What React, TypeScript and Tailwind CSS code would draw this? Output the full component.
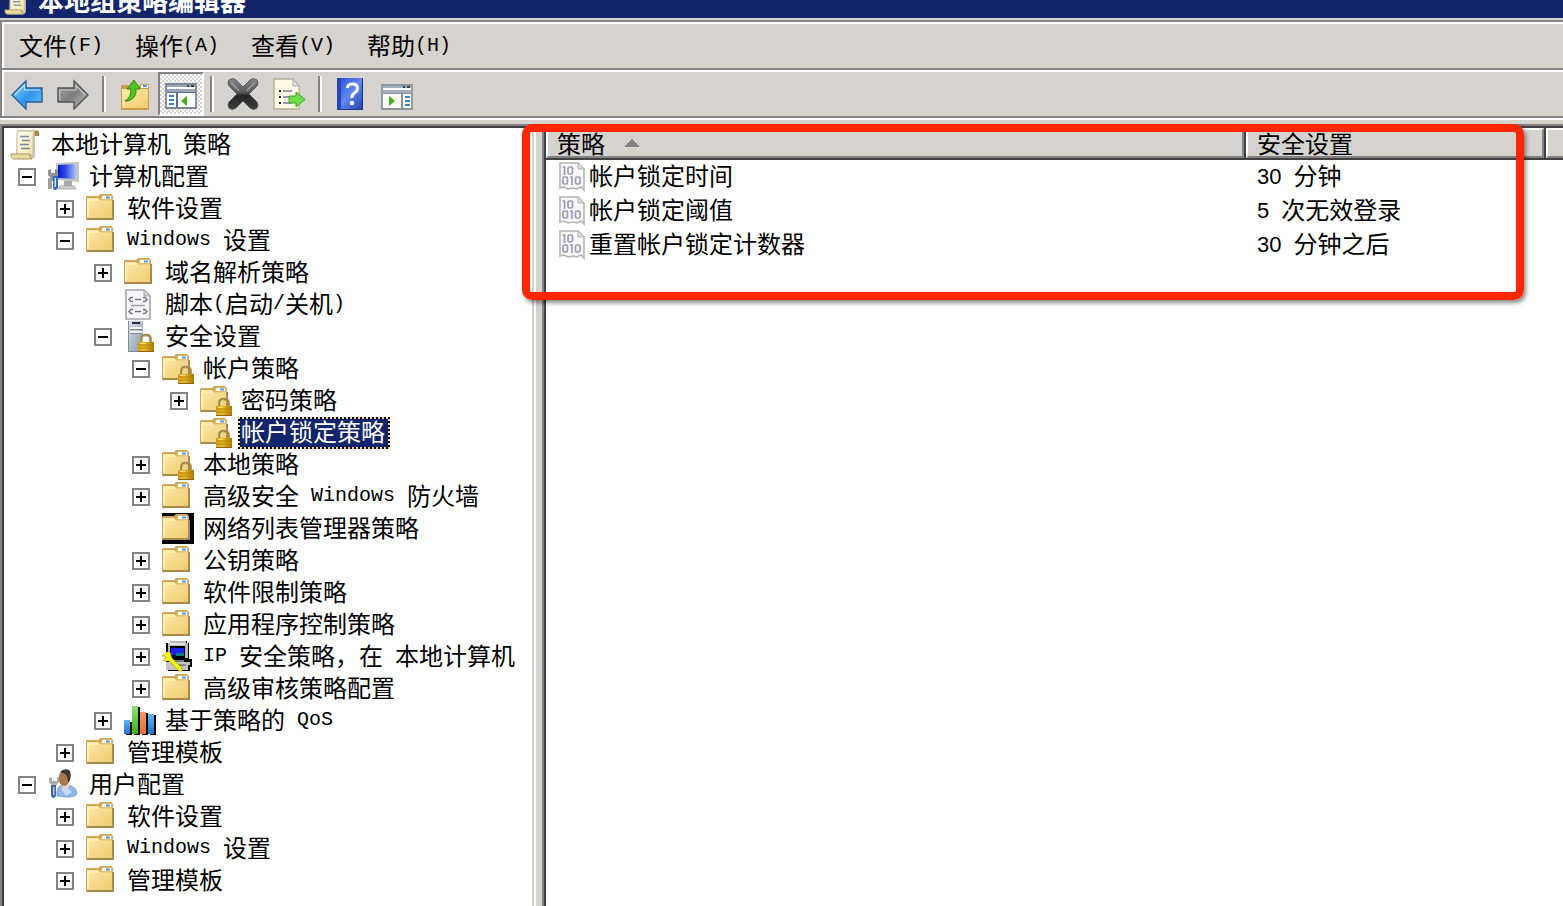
import { FC, ReactNode, useState } from 'react';
import clsx from 'clsx';

type IconProps = {
  className?: string
};

type TreeItem = {
  id: string
  label: string
  icon: FC<IconProps>
  children?: TreeItem[]
  closed?: boolean
};

/* ---------- icons ---------- */

const Svg = ({ className = 'size-8', children }: { className?: string, children: ReactNode }) => (
  <svg viewBox="0 0 32 32" className={clsx('shrink-0', className)} aria-hidden="true">{children}</svg>
);

// gradients shared by all the icons
const Gradients = () => (
  <svg className="absolute size-0" aria-hidden="true">
    <defs>
      <linearGradient id="g-folder" x1="0" y1="0" x2="1" y2="1">
        <stop offset="0" stopColor="#fdeaa8" />
        <stop offset="1" stopColor="#efcb70" />
      </linearGradient>
      <linearGradient id="g-blue" x1="0" y1="0" x2="1" y2="1">
        <stop offset="0" stopColor="#8fd6ff" />
        <stop offset="0.55" stopColor="#2f95ea" />
        <stop offset="1" stopColor="#7cc4f8" />
      </linearGradient>
      <linearGradient id="g-gray" x1="0" y1="0" x2="1" y2="1">
        <stop offset="0" stopColor="#a9a9a9" />
        <stop offset="0.5" stopColor="#7c7c7c" />
        <stop offset="1" stopColor="#c4c4c4" />
      </linearGradient>
      <linearGradient id="g-cross" x1="0" y1="0" x2="0" y2="1">
        <stop offset="0" stopColor="#858585" />
        <stop offset="0.45" stopColor="#5a5a5a" />
        <stop offset="0.55" stopColor="#262626" />
        <stop offset="1" stopColor="#3c3c3c" />
      </linearGradient>
      <linearGradient id="g-help" x1="0" y1="0" x2="1" y2="1">
        <stop offset="0" stopColor="#2a50cf" />
        <stop offset="0.5" stopColor="#5f86f0" />
        <stop offset="1" stopColor="#2140a8" />
      </linearGradient>
      <linearGradient id="g-screen" x1="0" y1="0" x2="1" y2="0">
        <stop offset="0" stopColor="#0a18c8" />
        <stop offset="0.4" stopColor="#2748e6" />
        <stop offset="1" stopColor="#a9c4fb" />
      </linearGradient>
      <linearGradient id="g-scroll" x1="0" y1="0" x2="1" y2="1">
        <stop offset="0" stopColor="#fffef2" />
        <stop offset="1" stopColor="#f3e5a0" />
      </linearGradient>
      <linearGradient id="g-server" x1="0" y1="0" x2="1" y2="1">
        <stop offset="0" stopColor="#dbe4ec" />
        <stop offset="1" stopColor="#8496a6" />
      </linearGradient>
      <linearGradient id="g-lock" x1="0" y1="0" x2="1" y2="0">
        <stop offset="0" stopColor="#d9a514" />
        <stop offset="0.4" stopColor="#e8b92c" />
        <stop offset="1" stopColor="#a87600" />
      </linearGradient>
      <linearGradient id="g-green" x1="0" y1="0" x2="0" y2="1">
        <stop offset="0" stopColor="#8be36b" />
        <stop offset="1" stopColor="#3fae1c" />
      </linearGradient>
      <linearGradient id="g-orange" x1="0" y1="0" x2="0" y2="1">
        <stop offset="0" stopColor="#f59a66" />
        <stop offset="1" stopColor="#ee6a2c" />
      </linearGradient>
      <linearGradient id="g-bar" x1="0" y1="0" x2="0" y2="1">
        <stop offset="0" stopColor="#62b8f5" />
        <stop offset="1" stopColor="#1f74cc" />
      </linearGradient>
    </defs>
  </svg>
);

const FolderShape = () => (
  <g>
    <path d="M0 27V4l1-1h11l2-2h11l2 2v24z" fill="#cda75a" />
    <path d="M26 7h2v20H1v-2h25z" fill="#a98a4c" />
    <path d="M1 5h11l2 2h12v18H1z" fill="url(#g-folder)" />
    <path d="M2 7v17M2 7h11" stroke="#fff3c4" strokeWidth="1.4" fill="none" />
    <path d="M12 5.5h3l1-3h9l1.5 3-1.5 2H14z" fill="#e6bd6a" />
    <path d="M16 3h9v3h-9z" fill="#fff" />
    <path d="M20 3.5h4v2h-4z" fill="#4a9ae0" />
  </g>
);

const LockShape = () => (
  <g>
    <path d="M19.5 22v-4.500q0-3.500 4.500-3.500t4.500 3.500V22" fill="none" stroke="#a08a4a" strokeWidth="2.600" />
    <path d="M20.500 21v-3.500q0-2.500 3.500-2.500" fill="none" stroke="#d8cc9c" strokeWidth="1" />
    <path d="M16 21h16v10H16z" fill="url(#g-lock)" />
    <path d="M16 24h16M16 27h16" stroke="#b98806" strokeWidth="1" />
    <path d="M16 30h16v1H16z" fill="#8e6700" />
    <path d="M18 22h5v1h-5z" fill="#f7de7c" />
  </g>
);

const FolderIcon: FC<IconProps> = ({ className }) => (
  <Svg className={className}><FolderShape /></Svg>
);

const LockedFolderIcon: FC<IconProps> = ({ className }) => (
  <Svg className={className}>
    <FolderShape />
    <LockShape />
  </Svg>
);

const BlackFolderIcon: FC<IconProps> = ({ className }) => (
  <Svg className={className}>
    <path d="M0 0h32v31H0z" fill="#000" />
    <FolderShape />
  </Svg>
);

const ScrollIcon: FC<IconProps> = ({ className }) => (
  <Svg className={className}>
    <path d="M7 4q0-3 3-3h16q3 0 3 3v2h-4v20q0 4-4 4H6z" fill="#c9c4b4" />
    <path d="M24 2h4q2 1 1 5h-4z" fill="#a48a4a" />
    <path d="M8 2h17q-2 2-2 6v18H7V6q0-3 1-4z" fill="url(#g-scroll)" stroke="#c8bd96" strokeWidth="1" />
    <path d="M1 25h19q-1 3 2 5H4q-3 0-3-5z" fill="#eadb9c" stroke="#a9976a" strokeWidth="1" />
    <path d="M10 7.500h9M12 11.500h8M10 15.500h9M11 19.500h9" stroke="#8087a8" strokeWidth="1.500" />
  </Svg>
);

const ComputerIcon: FC<IconProps> = ({ className }) => (
  <Svg className={className}>
    <path d="M8 2l23-1v20l-23-2z" fill="#c3c3c0" />
    <path d="M10 4l18-1v15l-18-1z" fill="url(#g-screen)" />
    <path d="M16 20h8v5h-8z" fill="#a8a8a8" />
    <path d="M12 25h14l2 3H10z" fill="#d4d4d4" stroke="#9c9c9c" strokeWidth="0.800" />
    <path d="M0 9v5l3 3v3h4v-3l3-3V9L7 8v4H3V8z" fill="#8f9490" />
    <path d="M0 17h4v11H0z" fill="#9b9f9d" />
    <path d="M5 15h5v12l-2 2H6l-1-2z" fill="#2f6fb8" />
    <path d="M6.500 17h1.500v9H6.500z" fill="#cfe4f7" />
  </Svg>
);

const UserIcon: FC<IconProps> = ({ className }) => (
  <Svg className={className}>
    <path d="M9 27q-1-10 6-11h6q8 3 8 9-2 3-9 3z" fill="#8fb6e6" stroke="#6d93c4" strokeWidth="0.800" />
    <path d="M13 20q3-3 6-2l5 5-6 4z" fill="#c5dcf6" />
    <path d="M13 17l5-4 4 4-5 3z" fill="#e8d6bf" />
    <ellipse cx="16" cy="9.500" rx="5.500" ry="7.500" fill="#a9774a" />
    <path d="M12 3q4-4 9-2 3 3 1 10l-2 3q0-7-3-9z" fill="#3d3630" />
    <path d="M1 9v4l2.500 3h5l2.500-3V9L9 8v4H4V8z" fill="#a9aeb0" />
    <path d="M3 16h5v11l-2 2H5l-2-2z" fill="#44679c" />
    <path d="M5 18h1.500v8H5z" fill="#a9c3e4" />
  </Svg>
);

const ScriptIcon: FC<IconProps> = ({ className }) => (
  <Svg className={className}>
    <path d="M2 1h18l6 6v23H2z" fill="#f7f7f9" stroke="#a5a5ab" strokeWidth="1.600" />
    <path d="M20 1v6h6z" fill="#d4d4d8" stroke="#a5a5ab" strokeWidth="1" />
    <path d="M9 8.500H7l-2 2 2 2h2M19 8.500h2l2 2-2 2h-2M11 10.500h6" fill="none" stroke="#75758e" strokeWidth="1.500" />
    <path d="M7 16.500h14" stroke="#9a9aac" strokeWidth="1.500" />
    <path d="M9 20.500H7l-2 2 2 2h2M19 20.500h2l2 2-2 2h-2M11 22.500h6" fill="none" stroke="#75758e" strokeWidth="1.500" />
  </Svg>
);

const ServerLockIcon: FC<IconProps> = ({ className }) => (
  <Svg className={className}>
    <path d="M4 0h15v31H4z" fill="url(#g-server)" />
    <path d="M8 1h8v2H8z" fill="#262e38" />
    <path d="M6 6h12v2H6zM6 10h12v2H6z" fill="#f5f8fa" />
    <path d="M6 8h12v1H6zM6 12h12v1H6z" fill="#75889a" />
    <path d="M4.500 0v30.500H19" fill="none" stroke="#7b8d9e" strokeWidth="1" />
    <g transform="translate(-2 0)"><LockShape /></g>
  </Svg>
);

const IpSecurityIcon: FC<IconProps> = ({ className }) => (
  <Svg className={className}>
    <g shapeRendering="crispEdges">
      <path d="M8 0h17v2h2v16h3v8h-2v4H6v-2H4V2h4z" fill="#000" />
      <path d="M8 0h16v2h2v15H6V2h2z" fill="#b8b8b8" />
      <path d="M8 2h15v2H8z" fill="#e4e4e4" />
      <path d="M8 5h15v12H8z" fill="#000" />
      <path d="M9 7h13v7H9z" fill="#1a20f0" />
      <path d="M14 12h8v3h-8z" fill="#0a7a80" />
      <path d="M8 19h14v2H8z" fill="#808080" />
      <path d="M4 21h24v3h-2v5H4z" fill="#c4c4c4" />
      <path d="M14 23h10v2H14z" fill="#8a8a8a" />
    </g>
    <path d="M0 15l3-2 1-2h4l1 3 1 3 10 10v3h-3L7 20H2v-2l2-1-1-2z" fill="#ffff00" stroke="#8c8c00" strokeWidth="0.600" />
  </Svg>
);

const QosIcon: FC<IconProps> = ({ className }) => (
  <Svg className={className}>
    <g shapeRendering="crispEdges">
      <path d="M2 17h6v13H2zM10 2h6v28h-6zM18 8h6v22h-6zM26 10h6v20h-6z" fill="#000" />
      <path d="M0 15h6v14H0z" fill="url(#g-bar)" />
      <path d="M8 1h6v28H8z" fill="url(#g-green)" />
      <path d="M16 7h6v22h-6z" fill="url(#g-orange)" />
      <path d="M24 9h6v20h-6z" fill="url(#g-bar)" />
    </g>
  </Svg>
);

const PolicyIcon: FC<IconProps> = ({ className }) => (
  <Svg className={className}>
    <path d="M3 2h18l6 6v21l-3-3-4 2-4-1-5 1-4-2-4 1z" fill="#f8f8f8" stroke="#b4b4b4" strokeWidth="1.600" />
    <path d="M21 2v6h6z" fill="#ddd" stroke="#b4b4b4" strokeWidth="1" />
    <g fill="none" stroke="#9a9ab4" strokeWidth="1.700">
      <path d="M5.500 6h2v8" />
      <rect x="11" y="6" width="4.500" height="7" rx="1.500" />
      <rect x="6" y="16" width="4.500" height="7" rx="1.500" />
      <path d="M13 16h2v8" />
      <rect x="18.500" y="16" width="4.500" height="7" rx="1.500" />
    </g>
  </Svg>
);

const BackIcon = () => (
  <Svg>
    <path d="M1 17L15 3v7h16v14H15v7z" fill="url(#g-blue)" stroke="#245f9e" strokeWidth="1.400" />
    <path d="M3.500 17L13.500 7v5H29" fill="none" stroke="#b8e4ff" strokeWidth="1.200" />
  </Svg>
);

const ForwardIcon = () => (
  <Svg>
    <path d="M31 17L17 3v7H1v14h16v7z" fill="url(#g-gray)" stroke="#565656" strokeWidth="1.400" />
    <path d="M2.800 22V12H19V7.500L28.500 17" fill="none" stroke="#c6c6c6" strokeWidth="1.200" />
  </Svg>
);

const UpFolderIcon = () => (
  <Svg>
    <path d="M2 7h9l2 2h6l2-3h9v26H2z" fill="#c99f4c" />
    <path d="M3 11h26v19H3z" fill="url(#g-folder)" />
    <path d="M22 7h7v3h-7z" fill="#fff" />
    <path d="M24 7h4v2h-4z" fill="#4a9ae0" />
    <path d="M6 23q6-3 6-12H8l7-9 6 9h-4q1 9-8 12z" fill="#4fc420" stroke="#2f8a10" strokeWidth="1" />
  </Svg>
);

const TreePaneIcon = () => (
  <Svg>
    <path d="M1 6h30v24H1z" fill="#fdfdfd" stroke="#7a8694" strokeWidth="1.800" />
    <path d="M2 7h28v2H2zM2 11h28v3H2z" fill="#9aa5b8" />
    <path d="M22 7h2v2h-2zM26 7h3v2h-3z" fill="#33415c" />
    <path d="M2 14h28v1H2zM11 15h2v14h-2z" fill="#5f6d84" />
    <path d="M4 18h5M4 22h5M4 26h5" stroke="#3f7fd0" strokeWidth="1.800" />
    <path d="M22 18v10l-6-5z" fill="#3fae1c" />
  </Svg>
);

const ActionPaneIcon = () => (
  <Svg>
    <path d="M1 7h30v24H1z" fill="#fdfdfd" stroke="#8a949c" strokeWidth="1.800" />
    <path d="M2 8h28v2H2zM2 12h28v3H2z" fill="#a3adbc" />
    <path d="M22 8h2v2h-2zM26 8h3v2h-3z" fill="#33415c" />
    <path d="M2 15h28v1H2zM20 16h2v14h-2z" fill="#8a949c" />
    <path d="M24 19h5M24 23h5M24 27h5" stroke="#3f7fd0" strokeWidth="1.800" />
    <path d="M8 18v10l6-5z" fill="#3fae1c" />
  </Svg>
);

const DeleteIcon = () => (
  <Svg>
    <path d="M2 2q4-3 7 0l7 7 7-7q3-3 7 0 2 3 0 6l-8 8 8 8q2 3 0 6-3 3-7 0l-7-7-7 7q-4 3-7 0-2-3 0-6l8-8-8-8q-2-3 0-6z" fill="url(#g-cross)" stroke="#5c5c5c" strokeWidth="1" />
    <path d="M4 4.500l8 8M28 4.500l-8 8" stroke="#a0a0a0" strokeWidth="1.500" />
  </Svg>
);

const ExportIcon = () => (
  <Svg>
    <path d="M1 1h19l6 7v23H1z" fill="#fffbe6" stroke="#b5ae94" strokeWidth="1.300" />
    <path d="M20 1v7h6z" fill="#e6e6e6" stroke="#a9a9a9" strokeWidth="1" />
    <path d="M10 13h9M10 19h7M10 25h9" stroke="#7a7a9c" strokeWidth="1.600" />
    <path d="M6 12h2v2H6zM6 18h2v2H6zM6 24h2v2H6z" fill="#222" />
    <path d="M16 18h7v-4l9 7.500-9 7.500v-4h-7z" fill="#6fdc4a" stroke="#3f9f22" strokeWidth="1" />
  </Svg>
);

const HelpIcon = () => (
  <Svg>
    <path d="M2 0h26v32H2z" fill="url(#g-help)" />
    <path d="M2 0h4v32H2z" fill="#2347b8" />
    <path d="M2 31h26v1H2zM27 0h1v32h-1z" fill="#1c3488" />
    <path d="M12.500 10q0-4 5-4t5 4q0 3-3 5t-2.500 5" fill="none" stroke="#fff" strokeWidth="3" />
    <circle cx="17" cy="25" r="2.200" fill="#fff" />
  </Svg>
);

/* ---------- data ---------- */

const menus = ['文件(F)', '操作(A)', '查看(V)', '帮助(H)'];

const toolGroups = [
  [{ name: '后退', icon: BackIcon }, { name: '前进', icon: ForwardIcon }],
  [{ name: '上一级', icon: UpFolderIcon }, { name: '显示/隐藏控制台树', icon: TreePaneIcon, pressed: true }],
  [{ name: '删除', icon: DeleteIcon }, { name: '导出列表', icon: ExportIcon }],
  [{ name: '帮助', icon: HelpIcon }, { name: '显示/隐藏操作窗格', icon: ActionPaneIcon }],
];

const tree: TreeItem[] = [
  {
    id: 'computer',
    label: '计算机配置',
    icon: ComputerIcon,
    children: [
      { id: 'c-software', label: '软件设置', icon: FolderIcon, closed: true },
      {
        id: 'c-windows',
        label: 'Windows 设置',
        icon: FolderIcon,
        children: [
          { id: 'dns', label: '域名解析策略', icon: FolderIcon, closed: true },
          { id: 'scripts', label: '脚本(启动/关机)', icon: ScriptIcon },
          {
            id: 'security',
            label: '安全设置',
            icon: ServerLockIcon,
            children: [
              {
                id: 'account',
                label: '帐户策略',
                icon: LockedFolderIcon,
                children: [
                  { id: 'password', label: '密码策略', icon: LockedFolderIcon, closed: true },
                  { id: 'lockout', label: '帐户锁定策略', icon: LockedFolderIcon },
                ],
              },
              { id: 'local', label: '本地策略', icon: LockedFolderIcon, closed: true },
              { id: 'firewall', label: '高级安全 Windows 防火墙', icon: FolderIcon, closed: true },
              { id: 'network', label: '网络列表管理器策略', icon: BlackFolderIcon },
              { id: 'public-key', label: '公钥策略', icon: FolderIcon, closed: true },
              { id: 'restriction', label: '软件限制策略', icon: FolderIcon, closed: true },
              { id: 'app-control', label: '应用程序控制策略', icon: FolderIcon, closed: true },
              { id: 'ip', label: 'IP 安全策略，在 本地计算机', icon: IpSecurityIcon, closed: true },
              { id: 'audit', label: '高级审核策略配置', icon: FolderIcon, closed: true },
            ],
          },
          { id: 'qos', label: '基于策略的 QoS', icon: QosIcon, closed: true },
        ],
      },
      { id: 'c-templates', label: '管理模板', icon: FolderIcon, closed: true },
    ],
  },
  {
    id: 'user',
    label: '用户配置',
    icon: UserIcon,
    children: [
      { id: 'u-software', label: '软件设置', icon: FolderIcon, closed: true },
      { id: 'u-windows', label: 'Windows 设置', icon: FolderIcon, closed: true },
      { id: 'u-templates', label: '管理模板', icon: FolderIcon, closed: true },
    ],
  },
];

const policies = [
  { name: '帐户锁定时间', amount: '30', unit: '分钟' },
  { name: '帐户锁定阈值', amount: '5', unit: '次无效登录' },
  { name: '重置帐户锁定计数器', amount: '30', unit: '分钟之后' },
];

/* ---------- parts ---------- */

// latin runs are set half as wide as the chinese characters
const MixedText = ({ text }: { text: string }) => (
  <span className="flex items-center whitespace-pre">
    {text.split(/([ -~]+)/).filter(Boolean).map((part) => (
      /^[ -~]/.test(part)
        ? <span key={part} className="font-['Liberation_Mono',monospace] text-[20px] leading-6">{part}</span>
        : <span key={part} className="pb-0.5 leading-6">{part}</span>
    ))}
  </span>
);

type NodeProps = {
  item: TreeItem
  selected: string
  onSelect: (id: string) => void
};

const TreeNode: FC<NodeProps> = ({ item, selected, onSelect }: NodeProps) => {
  const [isOpen, setIsOpen] = useState(!item.closed);
  const isSelected = item.id === selected;
  const Icon = item.icon;

  return (
    <li>
      <div className="flex h-8 items-center">
        {item.children || item.closed ? (
          <button type="button" aria-label={isOpen ? '折叠' : '展开'} onClick={() => setIsOpen(!isOpen)} className="size-[18px] shrink-0 border-2 border-[#848284] bg-white">
            <svg viewBox="0 0 14 14" className="size-[14px]" aria-hidden="true">
              <path d={isOpen ? 'M2 6h10v2H2z' : 'M2 6h10v2H2zM6 2h2v10H6z'} />
            </svg>
          </button>
        ) : <span className="size-[18px] shrink-0" />}
        <Icon className="ml-3 size-8" />
        <button
          type="button"
          onClick={() => onSelect(item.id)}
          className={clsx('ml-1.5 h-8 p-0.5', isSelected && 'bg-[repeating-conic-gradient(#000_0_25%,#f3d78f_0_50%)] bg-[length:4px_4px]')}
        >
          <span className={clsx('flex h-7 items-center pr-[3px] pb-0.5 pl-px', isSelected && 'bg-[#12246b] text-white')}>
            <MixedText text={item.label} />
          </span>
        </button>
      </div>
      {item.children && isOpen && (
        <ul className="pl-[38px]">
          {item.children.map((child) => <TreeNode key={child.id} item={child} selected={selected} onSelect={onSelect} />)}
        </ul>
      )}
    </li>
  );
};

const Separator = () => <div className="mx-1.5 h-9 w-1 border-l-2 border-[#848284] bg-white"></div>;

const App: FC = () => {
  const [selected, setSelected] = useState('lockout');

  return (
    <div className="flex h-screen flex-col overflow-hidden bg-[#d6d3ce] font-['Noto_Sans_CJK_SC',sans-serif] text-[24px] leading-7 text-black">
      <Gradients />

      {/* title bar */}
      <header className="flex h-[18px] shrink-0 items-end overflow-hidden bg-[#12246b] pl-1 text-white">
        <ScrollIcon className="mb-0.5 size-7" />
        <h1 className="ml-1.5 pb-1 text-[26px] leading-7 font-bold">本地组策略编辑器</h1>
      </header>

      {/* menu and toolbar */}
      <div className="mt-0.5 shrink-0 border-2 border-r-0 border-[#848284]">
        <nav className="flex h-[46px] items-center gap-8 border-t-2 border-l-2 border-white pl-[15px]">
          {menus.map((menu) => (
            <button key={menu} type="button"><MixedText text={menu} /></button>
          ))}
        </nav>
        <div className="flex h-12 items-center border-t-2 border-[#848284]">
          <div className="flex h-[46px] w-full items-center border-t-2 border-l-2 border-white">
            {toolGroups.map((group, i) => (
              <div key={group[0].name} className="flex items-center">
                {i > 0 && <Separator />}
                {group.map(({ name, icon: Icon, pressed }: { name: string, icon: FC, pressed?: boolean }) => (
                  <button
                    key={name}
                    type="button"
                    aria-label={name}
                    className={clsx('flex h-11 w-[46px] items-center justify-center', pressed && 'border-2 border-t-[#848284] border-r-white border-b-white border-l-[#848284] bg-[repeating-conic-gradient(#fff_0_25%,#d6d3ce_0_50%)] bg-[length:4px_4px]')}
                  >
                    <Icon />
                  </button>
                ))}
              </div>
            ))}
          </div>
        </div>
      </div>
      <div className="h-0.5 shrink-0 bg-white"></div>

      <main className="mt-1 flex min-h-0 grow">
        {/* console tree */}
        <div className="w-[534px] shrink-0 overflow-hidden border-t-2 border-r-2 border-l-2 border-t-[#848284] border-r-[#d6d3ce] border-l-[#848284] bg-white">
          <div className="h-full border-t-2 border-l-2 border-[#424142] pt-px">
            <div className="flex h-8 items-center pl-1.5">
              <ScrollIcon className="size-8" />
              <button type="button" className="ml-[9px] pb-0.5"><MixedText text="本地计算机 策略" /></button>
            </div>
            <ul className="pl-3.5">
              {tree.map((item) => <TreeNode key={item.id} item={item} selected={selected} onSelect={setSelected} />)}
            </ul>
          </div>
        </div>

        {/* splitter */}
        <div className="w-2 shrink-0 border-l-2 border-white"></div>

        {/* policy list */}
        <section className="relative min-w-0 grow border-t-2 border-l-2 border-[#848284]">
          <div className="h-full overflow-hidden border-t-2 border-l-2 border-[#424142] bg-white">
            <table className="w-full table-fixed border-separate border-spacing-0">
              <colgroup>
                <col className="w-[700px]" />
                <col className="w-[300px]" />
                <col />
              </colgroup>
              <thead>
                <tr className="h-8 bg-[#424142]">
                  <th className="pr-0.5 pb-0.5">
                    <div className="flex h-[30px] items-center gap-5 border-2 border-t-white border-r-[#848284] border-b-[#848284] border-l-white bg-[#d6d3ce] pl-[9px] font-normal">
                      策略
                      <svg viewBox="0 0 14 8" className="h-2 w-3.5" aria-hidden="true">
                        <path d="M6 0h2v2h2v2h2v2h2v2H0V6h2V4h2V2h2z" fill="#848284" />
                      </svg>
                    </div>
                  </th>
                  <th className="pr-0.5 pb-0.5">
                    <div className="flex h-[30px] items-center border-2 border-t-white border-r-[#848284] border-b-[#848284] border-l-white bg-[#d6d3ce] pl-[9px] font-normal">安全设置</div>
                  </th>
                  <td className="pb-0.5">
                    <div className="h-[30px] border-2 border-r-0 border-t-white border-b-[#848284] border-l-white bg-[#d6d3ce]"></div>
                  </td>
                </tr>
              </thead>
              <tbody>
                {policies.map(({ name, amount, unit }) => (
                  <tr key={name} className="h-[34px]">
                    <td className="p-0">
                      <div className="flex items-center pl-[11px]">
                        <PolicyIcon className="size-8" />
                        <span className="pb-1">{name}</span>
                      </div>
                    </td>
                    <td className="p-0">
                      <div className="flex items-center gap-3 pl-[11px]">
                        <span className="font-['Liberation_Sans',sans-serif] text-[22px]">{amount}</span>
                        <span className="pb-1">{unit}</span>
                      </div>
                    </td>
                    <td></td>
                  </tr>
                ))}
              </tbody>
            </table>
          </div>
          {/* highlight frame */}
          <div className="pointer-events-none absolute -top-0.5 right-[39px] -left-[22px] h-[176px] rounded-[10px] border-8 border-[#ff2600] shadow-[2px_3px_4px_rgba(0,0,0,0.45)]"></div>
        </section>
      </main>
    </div>
  );
};

export default App;
